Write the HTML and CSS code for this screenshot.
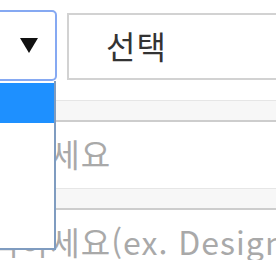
FILE: index.html
```html
<!DOCTYPE html>
<html lang="ko">
<head>
    <meta charset="UTF-8">
    <meta name="viewport" content="width=device-width, initial-scale=1.0">
    <title>Form</title>

    <link rel="stylesheet" href="styles.css">
</head>
<body>
    <div class="form">
        <div class="top">
            <div class="select focus">
                <svg class="arrow" width="18" height="15" viewBox="0 0 18 15">
                    <polygon points="0,0 18,0 9,15" fill="#111"/>
                </svg>
                <ul class="list">
                    <li class="on"></li>
                    <li></li>
                    <li></li>
                    <li></li>
                </ul>
            </div>
            <div class="select plain">선택</div>
        </div>

        <div class="band"></div>
        <div class="field">입력하세요</div>

        <div class="band"></div>
        <div class="field">입력하세요(ex. Designer)</div>
    </div>
</body>
</html>
```

FILE: styles.css
```css
:root {
    --focus: #86a9f2;
    --line: #d2d2d2;
    --listline: #7f9cc0;
    --pick: #1e90ff;
    --hint: #a9a9a9;
}

* {
    margin: 0;
    padding: 0;
    box-sizing: border-box;
}

body {
    width: 276px;
    height: 260px;
    overflow: hidden;
    background: #fff;
    font-family: "Noto Sans CJK KR", "Noto Sans", sans-serif;
}

.form {
    padding-top: 10px;
}

.top {
    display: flex;
    align-items: flex-start;
    height: 71px;
}

.select {
    height: 71px;
    display: flex;
    align-items: center;
}

.focus {
    position: relative;
    width: 77px;
    margin-left: -20px;
    border: 2px solid var(--focus);
    border-radius: 5px;
    justify-content: flex-end;
    padding-right: 17px;
    z-index: 2;
}

.plain {
    flex: 1;
    height: 67px;
    margin: 3px -20px 0 10px;
    border: 2px solid var(--line);
    padding: 0 0 4px 37px;
    font-size: 32px;
    letter-spacing: 1px;
    color: #333;
}

.list {
    position: absolute;
    top: calc(100% + 2px);
    left: -2px;
    right: -1px;
    height: 169px;
    list-style: none;
    background: #fff;
    border: 2px solid var(--listline);
    border-top: none;
}

.list li {
    height: 40px;
}

.list li.on {
    margin-top: 2px;
    background: var(--pick);
}

.band {
    height: 22px;
    margin-top: 19px;
    background: #f7f7f7;
    border-top: 1px solid #e6e6e6;
    border-bottom: 2px solid #cdcdcd;
}

.band + .field + .band {
    margin-top: 0;
}

.field {
    height: 66px;
    display: flex;
    align-items: center;
    padding-bottom: 5px;
    font-size: 32px;
    letter-spacing: 1px;
    color: var(--hint);
    white-space: nowrap;
    overflow: hidden;
    text-indent: -41px;
}
```
